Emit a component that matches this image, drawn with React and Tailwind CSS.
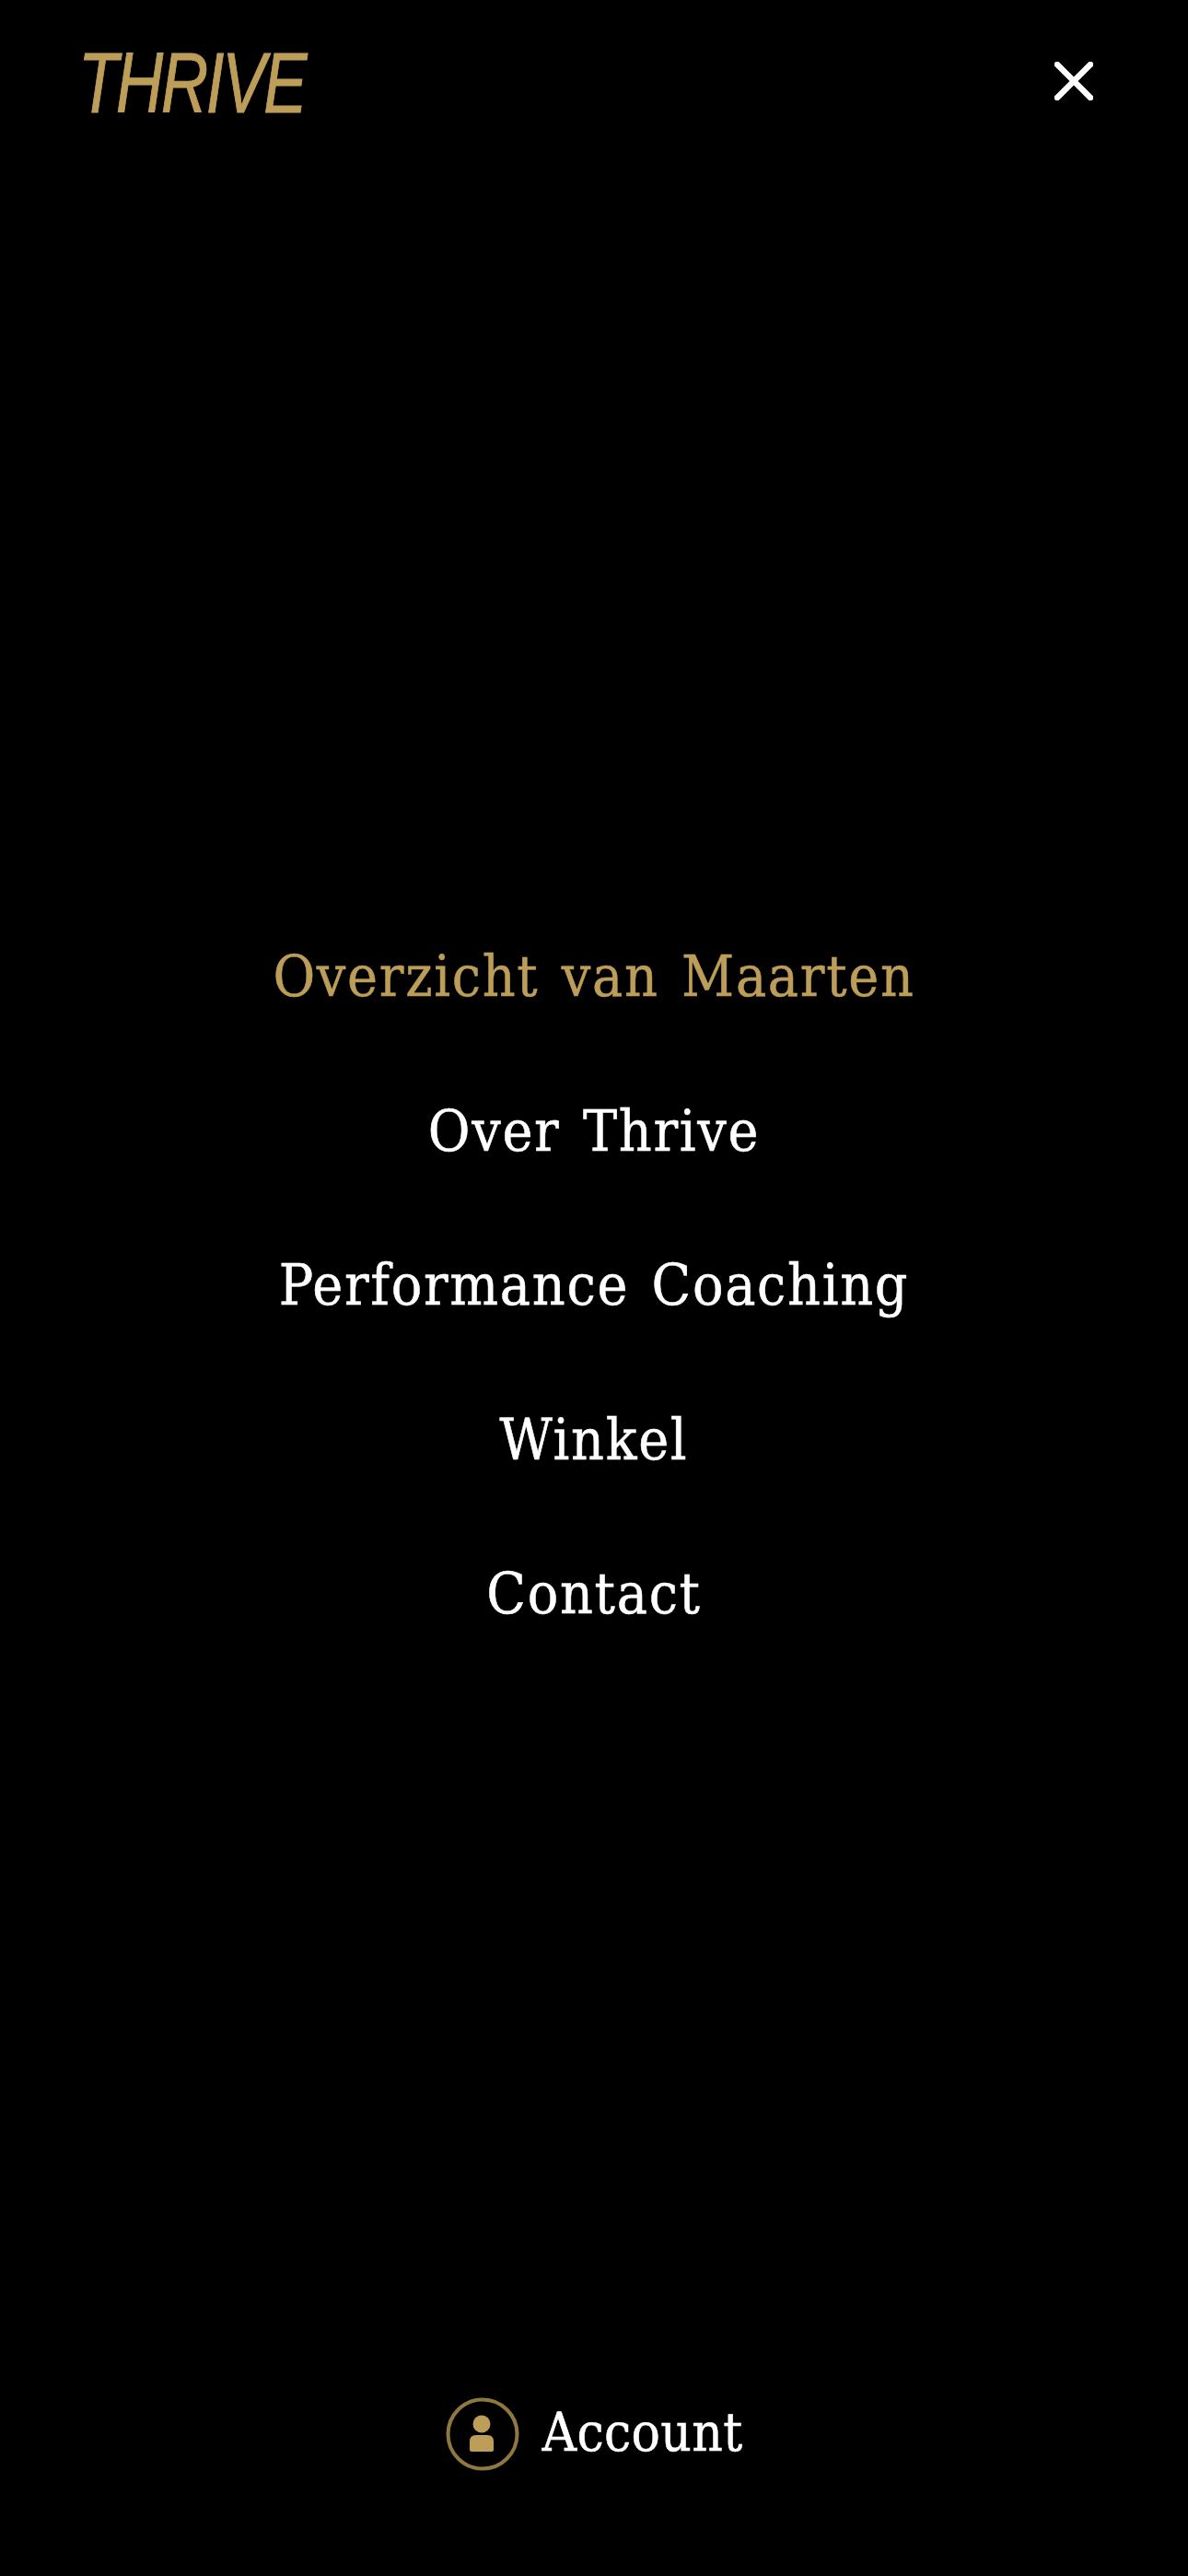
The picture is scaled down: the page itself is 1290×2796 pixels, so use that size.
import React from "react";

const items = ["Over Thrive", "Performance Coaching", "Winkel", "Contact"];
const serif = "font-['DejaVu_Serif_Condensed','DejaVu_Serif',serif] font-stretch-condensed";

export default function App() {
  return (
    <div className="flex h-[2796px] w-[1290px] flex-col bg-black">
      <header className="flex h-[176px] items-start justify-between pl-[85px] pr-[103px]">
        <span className="mt-[44px] inline-block origin-left scale-x-[0.762] font-['Liberation_Sans',sans-serif] text-[93px] leading-[93px] tracking-[-3px] text-[#bd9e59] italic [-webkit-text-stroke:1px_#bd9e59]">
          THRIVE
        </span>
        <button className="mt-[67px] text-white" aria-label="Sluiten">
          <svg className="block" width="42" height="42" viewBox="0 0 42 42" fill="none" stroke="currentColor" strokeWidth="6.5" strokeLinecap="round">
            <path d="M3 3 39 39M39 3 3 39" />
          </svg>
        </button>
      </header>
      <nav className={`mt-[853px] flex flex-col items-center gap-[105.6px] text-[62px] leading-[62px] tracking-[1.7px] text-white [word-spacing:5px] [-webkit-text-stroke:0.5px] ${serif}`}>
        <a className="text-[#bd9e59]">Overzicht van Maarten</a>
        {items.map((t) => (
          <a key={t}>{t}</a>
        ))}
      </nav>
      <div className={`mt-auto mb-[112px] flex items-center justify-center gap-[25px] text-[58px] leading-[80px] tracking-[0.3px] text-white [-webkit-text-stroke:0.5px] ${serif}`}>
        <svg className="blur-[0.6px]" width="80" height="80" viewBox="0 0 80 80">
          <circle cx="40" cy="40" r="37.5" fill="none" stroke="#8f7840" strokeWidth="4" />
          <circle cx="39" cy="29" r="9.5" fill="#bd9e59" />
          <path d="M26 57V48q0-7 7-7h12q7 0 7 7v9q0 2-2 2H28q-2 0-2-2Z" fill="#bd9e59" />
        </svg>
        <span className="pb-[4px]">Account</span>
      </div>
    </div>
  );
}
